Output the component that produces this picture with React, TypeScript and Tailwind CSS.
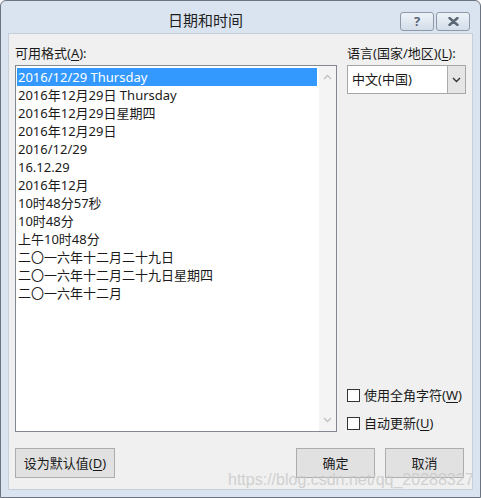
import React from 'react';

const formats = [
  '2016/12/29 Thursday',
  '2016年12月29日 Thursday',
  '2016年12月29日星期四',
  '2016年12月29日',
  '2016/12/29',
  '16.12.29',
  '2016年12月',
  '10时48分57秒',
  '10时48分',
  '上午10时48分',
  '二〇一六年十二月二十九日',
  '二〇一六年十二月二十九日星期四',
  '二〇一六年十二月',
];

const Chevron: React.FC<{ up?: boolean; color: string }> = ({ up, color }) => (
  <svg width="9" height="6" viewBox="0 0 9 6">
    <polyline
      points={up ? '1,5 4.5,1.5 8,5' : '1,1 4.5,4.5 8,1'}
      fill="none"
      stroke={color}
      strokeWidth="1.4"
    />
  </svg>
);

const Checkbox: React.FC<{ label: string; hotkey: string }> = ({ label, hotkey }) => (
  <div className="flex items-center h-[18px]">
    <div className="w-[13px] h-[13px] bg-white border border-[#333333]" />
    <span className="ml-[4px] text-[13px] leading-[18px] text-[#1a1a1a]">
      {label}(<span className="underline underline-offset-2">{hotkey}</span>)
    </span>
  </div>
);

export default function App() {
  const btnClass = "h-[30px] bg-[#e1e1e1] border border-[#adadad] text-[13px] leading-[18px] text-[#1a1a1a] flex items-center justify-center";

  return (
    <div className="w-[481px] h-[498px] bg-[#dae4f0] border border-[#6b7480] rounded-t-[6px] flex flex-col relative overflow-hidden font-['Noto_Sans','Noto_Sans_CJK_SC',sans-serif]">
      {/* title bar */}
      <div className="h-[32px] shrink-0 flex pr-[10px]">
        <div className="flex-1 text-center pl-[10px] pt-[8px] text-[15px] leading-[22px] text-[#1e1e1e]">日期和时间</div>
        <div className="flex gap-[2px] pt-[11px]">
          <div className="w-[34px] h-[19px] rounded-[3px] border border-[#8e99a8] bg-gradient-to-b from-[#eef3f9] to-[#d3dde9] flex items-center justify-center">
            <span className="text-[13px] leading-[13px] font-bold text-[#5b6675]">?</span>
          </div>
          <div className="w-[34px] h-[19px] rounded-[3px] border border-[#8e99a8] bg-gradient-to-b from-[#eef3f9] to-[#d3dde9] flex items-center justify-center">
            <svg width="11" height="9" viewBox="0 0 11 9">
              <path d="M1.5 1 L9.5 8 M9.5 1 L1.5 8" stroke="#5b6675" strokeWidth="2.4" strokeLinecap="round" />
            </svg>
          </div>
        </div>
      </div>

      {/* client area */}
      <div className="flex-1 mx-[7px] mb-[7px] bg-[#f0f0f0] border border-[#c6cfda] flex flex-col">
        <div className="flex pl-[6px] pt-[10px] h-[398px]">
          {/* formats */}
          <div className="w-[322px] flex flex-col">
            <div className="h-[18px] text-[13px] leading-[18px] text-[#1a1a1a]">
              可用格式(<span className="underline underline-offset-2">A</span>):
            </div>
            <div className="mt-[3px] h-[367px] bg-white border border-[#828790] flex">
              <div className="flex-1 pl-[1px] pt-[2px] pr-[2px]">
                {formats.map((f, i) => (
                  <div
                    key={f}
                    className={
                      i === 0
                        ? 'h-[18px] pl-[1px] text-[13px] leading-[18px] whitespace-nowrap bg-[#3399ff] text-white'
                        : 'h-[18px] pl-[1px] text-[13px] leading-[18px] whitespace-nowrap text-[#1a1a1a]'
                    }
                  >
                    {f}
                  </div>
                ))}
              </div>
              <div className="w-[17px] bg-[#f4f4f4] flex flex-col justify-between items-center py-[8px]">
                <Chevron up color="#c2c2c2" />
                <Chevron color="#c2c2c2" />
              </div>
            </div>
          </div>

          {/* language */}
          <div className="ml-[10px] w-[119px] flex flex-col">
            <div className="h-[18px] text-[13px] leading-[18px] text-[#1a1a1a] whitespace-nowrap">
              语言(国家/地区)(<span className="underline underline-offset-2">L</span>):
            </div>
            <div className="mt-[3px] h-[29px] bg-white border border-[#a7a7a7] flex">
              <div className="flex-1 pl-[4px] text-[13px] leading-[27px] text-[#1a1a1a]">中文(中国)</div>
              <div className="w-[18px] bg-[#e5e5e5] border-l border-[#acacac] flex items-center justify-center">
                <Chevron color="#333333" />
              </div>
            </div>
            <div className="mt-auto flex flex-col gap-[10px]">
              <Checkbox label="使用全角字符" hotkey="W" />
              <Checkbox label="自动更新" hotkey="U" />
            </div>
          </div>
        </div>

        {/* buttons */}
        <div className="flex pl-[6px] pt-[16px]">
          <div className={btnClass + ' w-[100px]'}>
            设为默认值(<span className="underline underline-offset-2">D</span>)
          </div>
          <div className={btnClass + ' w-[79px] ml-[181px] border-[#3c9ae6]'}>确定</div>
          <div className={btnClass + ' w-[79px] ml-[10px]'}>取消</div>
        </div>
      </div>

      {/* watermark */}
      <div className="absolute left-[227px] top-[469px] text-[16px] leading-[20px] font-['Liberation_Sans',sans-serif] text-[#c9c9c9] opacity-80 whitespace-nowrap pointer-events-none">
        https://blog.csdn.net/qq_20288327
      </div>
    </div>
  );
}
